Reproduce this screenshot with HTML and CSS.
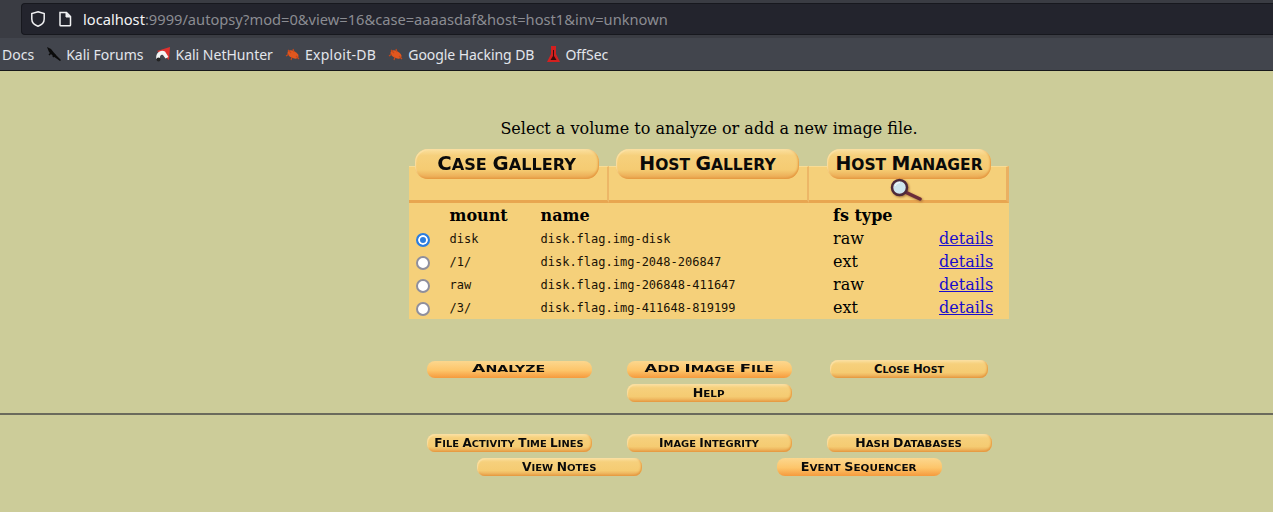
FILE: index.html
```html
<!DOCTYPE html>
<html lang="en">
<head>
<meta charset="utf-8">
<title>Autopsy</title>
<link rel="stylesheet" href="styles.css">
</head>
<body>
<header class="chrome">
  <div class="toolbar">
    <div class="urlbar">
      <svg class="shield" width="18" height="18" viewBox="0 0 18 18"><path d="M9 1.800 15.200 3.600V9c0 3.600-2.700 6-6.200 7.200C5.500 15 2.800 12.600 2.800 9V3.600Z" fill="none" stroke="#f1f1f3" stroke-width="1.500"/></svg>
      <svg class="page" width="14" height="16" viewBox="0 0 14 16"><path d="M2 1.500h6.500L12.500 5.500V14a.8.8 0 0 1-.8.8H2.800A.8.8 0 0 1 2 14Z" fill="none" stroke="#f1f1f3" stroke-width="1.500"/><path d="M8 1.500V6h4.500" fill="#f1f1f3" stroke="#f1f1f3"/></svg>
      <span class="url"><span class="host">localhost</span>:9999/autopsy?mod=0&amp;view=16&amp;case=aaaasdaf&amp;host=host1&amp;inv=unknown</span>
    </div>
  </div>
  <nav class="bookmarks">
    <span class="mark">Docs</span>
    <span class="mark"><svg width="16" height="16" viewBox="0 0 16 16"><path d="M1 1 5 3 9 8 15 14 14 15 7 10 3 6Z" fill="#0b0b0b"/><path d="M6 6 3 9M9 8 7 11" stroke="#0b0b0b" stroke-width="1.500"/></svg>Kali Forums</span>
    <span class="mark"><svg width="16" height="16" viewBox="0 0 16 16"><path d="M2 5 15 1 14 14 8 9Z" fill="#e0312f"/><path d="M1.500 13C0 8 5 3 10 5.500l3.500 5.500-3 1.500L8 9C6 8 4.500 10 5 13Z" fill="#f4f4f4"/><circle cx="3.500" cy="13.500" r="2" fill="#222"/></svg>Kali NetHunter</span>
    <span class="mark wide"><svg width="16" height="16" viewBox="0 0 16 16"><ellipse cx="8" cy="8.500" rx="6" ry="3.500" transform="rotate(28 8 8.500)" fill="#e2571e"/><path d="M1 10 4 8M3 4 6 7M8 3 9 6M14 13 11 10M6 14 7 11" stroke="#c8481a" stroke-width="1.200"/></svg>Exploit-DB</span>
    <span class="mark narrow"><svg width="16" height="16" viewBox="0 0 16 16"><ellipse cx="8" cy="8.500" rx="6" ry="3.500" transform="rotate(28 8 8.500)" fill="#e2571e"/><path d="M1 10 4 8M3 4 6 7M8 3 9 6M14 13 11 10M6 14 7 11" stroke="#c8481a" stroke-width="1.200"/></svg>Google Hacking DB</span>
    <span class="mark"><svg width="15" height="18" viewBox="0 0 15 18"><path d="M5 1h5L10 9 14 17H1L5 9Z" fill="#d3201f"/><path d="M7 5h1v6l2.500 4h-6L7 11Z" fill="#3a0c0c"/></svg>OffSec</span>
  </nav>
</header>
<main class="content">
  <section class="center">
    <p class="intro">Select a volume to analyze or add a new image file.</p>
    <div class="tabs">
      <div class="tab"><a class="btn tab-btn case"><span class="t sx-case"><i>C</i>ase <i>G</i>allery</span></a></div>
      <div class="tab"><a class="btn tab-btn hostg"><span class="t"><i>H</i>ost <i>G</i>allery</span></a></div>
      <div class="tab last">
        <a class="btn tab-btn hostm"><span class="t"><i>H</i>ost <i>M</i>anager</span></a>
        <svg class="lens" width="36" height="24" viewBox="0 0 36 24"><path d="M15 13 32 21" stroke="#6b2c3a" stroke-width="3.500" stroke-linecap="round"/><circle cx="11.500" cy="9.500" r="7.500" fill="#cfe6ee" stroke="#4d2a3a" stroke-width="2.500"/><path d="M7 8A5 5 0 0 1 12 4.500" stroke="#fff" fill="none"/></svg>
      </div>
    </div>
    <table class="volumes">
      <thead>
        <tr><th class="c-radio"></th><th class="c-mount">mount</th><th class="c-name">name</th><th class="c-type">fs type</th><th class="c-link"></th></tr>
      </thead>
      <tbody>
        <tr><td class="nudge"><span class="radio on"></span></td><td class="mono">disk</td><td class="mono">disk.flag.img-disk</td><td>raw</td><td><a class="link">details</a></td></tr>
        <tr><td class="nudge"><span class="radio"></span></td><td class="mono">/1/</td><td class="mono">disk.flag.img-2048-206847</td><td>ext</td><td><a class="link">details</a></td></tr>
        <tr><td class="nudge"><span class="radio"></span></td><td class="mono">raw</td><td class="mono">disk.flag.img-206848-411647</td><td>raw</td><td><a class="link">details</a></td></tr>
        <tr><td class="nudge"><span class="radio"></span></td><td class="mono">/3/</td><td class="mono">disk.flag.img-411648-819199</td><td>ext</td><td><a class="link">details</a></td></tr>
      </tbody>
    </table>
    <div class="actions">
      <a class="btn small bright"><span class="t sx-analyze"><i>A</i>nalyze</span></a>
      <a class="btn small bright"><span class="t sx-add"><i>A</i>dd <i>I</i>mage <i>F</i>ile</span></a>
      <a class="btn small close"><span class="t sx-close"><i>C</i>lose <i>H</i>ost</span></a>
      <a class="btn small help"><span class="t sx-help"><i>H</i>elp</span></a>
    </div>
  </section>
  <hr class="rule">
  <section class="center">
    <div class="row three">
      <a class="btn small tall"><span class="t sx-file"><i>F</i>ile <i>A</i>ctivity <i>T</i>ime <i>L</i>ines</span></a>
      <a class="btn small tall"><span class="t sx-image"><i>I</i>mage <i>I</i>ntegrity</span></a>
      <a class="btn small tall"><span class="t sx-hash"><i>H</i>ash <i>D</i>atabases</span></a>
    </div>
    <div class="row two">
      <a class="btn small tall"><span class="t sx-view"><i>V</i>iew <i>N</i>otes</span></a>
      <a class="btn small tall bright"><span class="t sx-event"><i>E</i>vent <i>S</i>equencer</span></a>
    </div>
  </section>
</main>
</body>
</html>
```
FILE: styles.css
```css
* { box-sizing: border-box; }
html, body { margin: 0; padding: 0; }
body {
  width: 1273px;
  height: 512px;
  overflow: hidden;
  background: #cccc99;
  font-family: "DejaVu Serif", serif;
  font-size: 16px;
  color: #000;
}
.chrome {
  height: 71px;
  background: #42454d;
  border-bottom: 1px solid #17181b;
  font-family: "Noto Sans", sans-serif;
  font-size: 14px;
}
.toolbar {
  height: 38px;
  padding: 3px 0 0 21px;
  background: #3a3c43;
}
.urlbar {
  height: 32px;
  padding-left: 7px;
  display: flex;
  align-items: center;
  background: #23242d;
  border: 1px solid #17181e;
  border-right: 0;
  border-radius: 4px 0 0 4px;
}
.shield { flex: none; }
.page { flex: none; margin-left: 11px; }
.url { margin-left: 11px; font-size: 14.670px; color: #8b8c92; white-space: nowrap; }
.host { color: #f4f4f6; }
.bookmarks {
  height: 32px;
  padding-left: 2px;
  display: flex;
  align-items: center;
  gap: 12px;
  color: #e3e6ec;
}
.mark { display: inline-flex; align-items: center; gap: 4px; white-space: nowrap; }
.wide { letter-spacing: 0.300px; }
.narrow { letter-spacing: -0.060px; }
.center { width: 600px; margin-left: 409px; }
.intro { margin: 0; padding-top: 48px; height: 95px; text-align: center; line-height: 19px; }
.tabs { display: flex; height: 37px; }
.tab {
  position: relative;
  width: 200px;
  background: #f5d07a;
  border-right: 2px solid #ecb767;
  border-bottom: 3px solid #e8a650;
  border-top: 1px solid #f9dc94;
}
.tab.last { border-right: 3px solid #eab062; }
.btn {
  display: flex;
  align-items: center;
  justify-content: center;
  font-family: "DejaVu Sans", sans-serif;
  font-weight: 700;
  color: #0a0a0a;
  white-space: nowrap;
  text-transform: uppercase;
  background: linear-gradient(#fbe0a0 0, #f6d07c 22%, #f5cb72 70%, #e9a44f 100%);
  box-shadow: inset -1px -1px 2px #e5983f, inset 1px 1px 1px #fbe3a8;
}
.t { display: inline-block; line-height: 1; font-size: 1em; }
.t i { font-style: normal; font-size: 1.220em; }
.tab-btn {
  position: absolute;
  top: -18px;
  height: 30px;
  padding-bottom: 1px;
  border-radius: 13px;
  font-size: 15.500px;
}
.case { left: 6px; width: 184px; }
.hostg { left: 7px; width: 183px; }
.hostm { left: 18px; width: 164px; }
.lens { position: absolute; left: 79px; top: 11px; filter: drop-shadow(1px 1px 1px #a8743a); }
.volumes {
  width: 600px;
  height: 116px;
  table-layout: fixed;
  border-collapse: collapse;
  background: #f5d07a;
}
.volumes th { padding: 0; font-weight: 700; text-align: left; height: 24px; line-height: 19px; }
.volumes td { padding: 0; height: 23px; line-height: 19px; }
.c-radio { width: 40.500px; }
.c-mount { width: 91px; }
.c-name { width: 292.500px; }
.c-type { width: 106px; }
.volumes td.mono { padding-top: 2px; font-family: "DejaVu Sans Mono", monospace; font-size: 12px; color: #1a1205; }
.volumes td.nudge { padding-top: 2px; }
.link { color: #1a0dcc; text-decoration: underline; }
.radio {
  display: block;
  width: 14px;
  height: 14px;
  margin-left: 7px;
  border: 2px solid #8f8f9d;
  border-radius: 50%;
  background: #fff;
}
.radio.on { border: 2px solid #2b7de0; background: #2b7de0; box-shadow: inset 0 0 0 2px #fff; }
.actions {
  display: grid;
  grid-template-columns: repeat(3, 200px);
  grid-auto-rows: 24px;
  padding-top: 38px;
  height: 94px;
  justify-items: center;
  align-items: center;
}
.help { grid-column: 2; }
.small { width: 165px; height: 17px; border-radius: 8px; font-size: 8px; }
.bright { background: linear-gradient(#fcd78e 0, #fdc56a 55%, #f59a3d 100%); box-shadow: none; }
.close { width: 158px; height: 18px; font-size: 9.500px; padding-top: 2px; }
.help { height: 18px; font-size: 9.500px; padding-top: 2px; }
.tall { height: 18px; font-size: 9.500px; padding-top: 2px; }
.rule {
  width: 1273px;
  height: 2px;
  margin: 0 0 19px;
  border: 0;
  background: #6a6a5c;
}
.row { display: flex; justify-content: center; height: 24px; }
.three { gap: 35px; }
.two { gap: 135px; }
.sx-case { transform: scaleX(1.040); }
.sx-analyze { transform: scaleX(1.770); }
.sx-add { transform: scaleX(1.690); }
.sx-close { transform: scaleX(1); }
.sx-help { transform: scaleX(1.090); }
.sx-file { transform: scaleX(1.040); }
.sx-image { transform: scaleX(1.040); }
.sx-hash { transform: scaleX(1.075); }
.sx-view { transform: scaleX(1.060); }
.sx-event { transform: scaleX(1.100); }
```
